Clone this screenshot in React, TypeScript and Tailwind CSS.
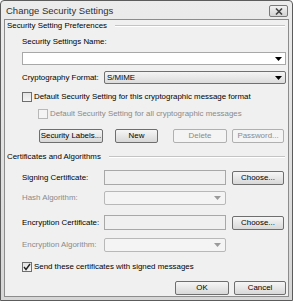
import React from "react";

const font = { fontFamily: '"Liberation Sans", Arial, sans-serif' };

function Arrow({ disabled }: { disabled?: boolean }) {
  return (
    <svg width="7" height="4" viewBox="0 0 7 4" className="shrink-0">
      <path d="M0 0 L7 0 L3.5 4 Z" fill={disabled ? "#9a9a9a" : "#000"} />
    </svg>
  );
}

function Btn({ children, w, disabled }: { children: React.ReactNode; w: string; disabled?: boolean }) {
  return (
    <div
      className={
        "h-[14px] flex items-center justify-center rounded-[2px] border text-[7.9px] leading-none whitespace-nowrap " +
        w +
        (disabled
          ? " border-[#b0b0b0] bg-[#f4f4f4] text-[#8a8a8a]"
          : " border-[#6e6e6e] bg-gradient-to-b from-[#f6f6f6] to-[#d8d8d8] text-black")
      }
    >
      {children}
    </div>
  );
}

function SectionHeader({ children }: { children: React.ReactNode }) {
  return (
    <div className="h-[12px] flex items-center gap-[8px] pr-[1px]">
      <span className="text-[7.9px] leading-none text-black whitespace-nowrap">{children}</span>
      <div className="flex-1 h-[2px] border-t border-[#c4c4c4] border-b border-b-white" />
    </div>
  );
}

function Check({ checked, disabled }: { checked?: boolean; disabled?: boolean }) {
  return (
    <div
      className={
        "w-[10px] h-[10px] border flex items-center justify-center shrink-0 " +
        (disabled ? "border-[#b8b8b8] bg-[#f4f4f4]" : "border-[#6e6e6e] bg-gradient-to-b from-[#e4e4e4] to-[#f4f4f4]")
      }
    >
      {checked && (
        <svg width="8" height="8" viewBox="0 0 8 8">
          <path d="M1 4 L3 6.5 L7 1" stroke="#222" strokeWidth="1.4" fill="none" />
        </svg>
      )}
    </div>
  );
}

const lbl = "w-[82px] shrink-0 text-[7.9px] leading-none whitespace-nowrap";
const txt = "text-[7.9px] leading-none whitespace-nowrap";

export default function App() {
  return (
    <div className="w-[293px] h-[304px] bg-white" style={font}>
      <div className="w-[293px] h-[301px] border border-[#5c5c5c] rounded-t-[4px] bg-gradient-to-b from-[#ececec] to-[#d6d6d6] flex flex-col">
        <div className="h-[18px] flex items-center justify-between pl-[5px] pr-[4px] shrink-0">
          <span className="text-[9.5px] leading-none text-[#303030] mt-[1px] whitespace-nowrap">Change Security Settings</span>
          <div className="w-[19px] h-[12px] mt-[2px] border border-[#7a7a7a] rounded-[2px] bg-gradient-to-b from-[#f2f2f2] to-[#d4d4d4] flex items-center justify-center">
            <svg width="8" height="7" viewBox="0 0 8 7">
              <path d="M1 0.5 L7 6.5 M7 0.5 L1 6.5" stroke="#444" strokeWidth="1.6" />
            </svg>
          </div>
        </div>
        <div className="flex-1 mx-[3px] mb-[3px] border border-[#8c8c8c] bg-[#f0f0f0] pl-[2px] pr-[2px] flex flex-col">
          <SectionHeader>Security Setting Preferences</SectionHeader>
          <div className="pl-[15px] flex flex-col">
            <div className={"mt-[4px] h-[12px] flex items-center " + txt}>Security Settings Name:</div>
            <div className="mt-[4px] h-[13px] border border-[#a8a8a8] bg-white flex items-center justify-end pr-[3px]">
              <Arrow />
            </div>
            <div className="mt-[6px] h-[13px] flex items-center">
              <span className={lbl}>Cryptography Format:</span>
              <div className="flex-1 h-[13px] border border-[#707070] rounded-[2px] bg-gradient-to-b from-[#f4f4f4] to-[#dcdcdc] flex items-center justify-between pl-[2px] pr-[3px]">
                <span className={txt}>S/MIME</span>
                <Arrow />
              </div>
            </div>
            <div className="mt-[7px] h-[12px] flex items-center gap-[2px]">
              <Check />
              <span className={txt}>Default Security Setting for this cryptographic message format</span>
            </div>
            <div className="mt-[5px] h-[12px] flex items-center gap-[2px] pl-[16px]">
              <Check disabled />
              <span className={txt + " text-[#8a8a8a]"}>Default Security Setting for all cryptographic messages</span>
            </div>
            <div className="mt-[9px] h-[14px] flex items-center pl-[17px]">
              <Btn w="w-[64px]">Security Labels...</Btn>
              <div className="ml-[12px]"><Btn w="w-[43px]">New</Btn></div>
              <div className="ml-[15px]"><Btn w="w-[54px]" disabled>Delete</Btn></div>
              <div className="ml-[5px]"><Btn w="w-[52px]" disabled>Password...</Btn></div>
            </div>
          </div>
          <div className="mt-[8px]">
            <SectionHeader>Certificates and Algorithms</SectionHeader>
          </div>
          <div className="pl-[15px] flex flex-col">
            <div className="mt-[7px] h-[15px] flex items-center">
              <span className={lbl}>Signing Certificate:</span>
              <div className="w-[122px] h-[15px] border border-[#a8a8a8] bg-[#f0f0f0]" />
              <div className="ml-[6px]"><Btn w="w-[52px]">Choose...</Btn></div>
            </div>
            <div className="mt-[6px] h-[14px] flex items-center">
              <span className={lbl + " text-[#8a8a8a]"}>Hash Algorithm:</span>
              <div className="w-[122px] h-[14px] border border-[#b8b8b8] rounded-[2px] bg-[#f4f4f4] flex items-center justify-end pr-[4px]">
                <Arrow disabled />
              </div>
            </div>
            <div className="mt-[10px] h-[15px] flex items-center">
              <span className={lbl}>Encryption Certificate:</span>
              <div className="w-[122px] h-[15px] border border-[#a8a8a8] bg-[#f0f0f0]" />
              <div className="ml-[6px]"><Btn w="w-[52px]">Choose...</Btn></div>
            </div>
            <div className="mt-[8px] h-[14px] flex items-center">
              <span className={lbl + " text-[#8a8a8a]"}>Encryption Algorithm:</span>
              <div className="w-[122px] h-[14px] border border-[#b8b8b8] rounded-[2px] bg-[#f4f4f4] flex items-center justify-end pr-[4px]">
                <Arrow disabled />
              </div>
            </div>
            <div className="mt-[9px] h-[12px] flex items-center gap-[2px]">
              <Check checked />
              <span className={txt}>Send these certificates with signed messages</span>
            </div>
            <div className="mt-[8px] h-[14px] flex items-center justify-end">
              <Btn w="w-[54px]">OK</Btn>
              <div className="ml-[5px]"><Btn w="w-[52px]">Cancel</Btn></div>
            </div>
          </div>
        </div>
      </div>
    </div>
  );
}
